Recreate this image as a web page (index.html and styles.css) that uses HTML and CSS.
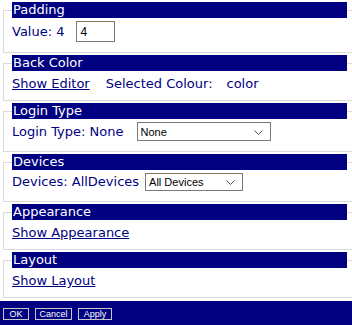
FILE: index.html
```html
<!DOCTYPE html>
<html lang="en">
<head>
  <meta charset="UTF-8">
  <meta name="viewport" content="width=device-width, initial-scale=1.0">
  <title>Module Settings</title>
  <link rel="stylesheet" href="styles.css">
</head>
<body>
  <div class="settings">
    <fieldset class="group">
      <legend>Padding</legend>
      <div class="row">
        <label for="padding" class="label">Value: 4</label>
        <input type="text" id="padding" class="value-input" value="4">
      </div>
    </fieldset>

    <fieldset class="group group-text">
      <legend>Back Color</legend>
      <div class="row">
        <a href="#" class="link">Show Editor</a>
        <span class="label selected">Selected Colour:</span>
        <span class="label colour-name">color</span>
      </div>
    </fieldset>

    <fieldset class="group">
      <legend>Login Type</legend>
      <div class="row">
        <label for="loginType" class="label">Login Type: None</label>
        <span class="select-wrap login-select">
          <select id="loginType" class="dropdown">
            <option>None</option>
            <option>Required</option>
          </select>
          <svg class="chevron" width="9" height="5" viewBox="0 0 9 5"><path d="M0.5 0.5 L4.5 4.5 L8.5 0.5" fill="none" stroke="#555" stroke-width="1"/></svg>
        </span>
      </div>
    </fieldset>

    <fieldset class="group">
      <legend>Devices</legend>
      <div class="row">
        <label for="devices" class="label">Devices: AllDevices</label>
        <span class="select-wrap devices-select">
          <select id="devices" class="dropdown">
            <option>All Devices</option>
            <option>Desktop</option>
            <option>Mobile</option>
          </select>
          <svg class="chevron" width="9" height="5" viewBox="0 0 9 5"><path d="M0.5 0.5 L4.5 4.5 L8.5 0.5" fill="none" stroke="#555" stroke-width="1"/></svg>
        </span>
      </div>
    </fieldset>

    <fieldset class="group group-text">
      <legend>Appearance</legend>
      <div class="row">
        <a href="#" class="link">Show Appearance</a>
      </div>
    </fieldset>

    <fieldset class="group group-text">
      <legend>Layout</legend>
      <div class="row">
        <a href="#" class="link">Show Layout</a>
      </div>
    </fieldset>
  </div>

  <div class="button-bar">
    <button type="button" class="bar-btn btn-ok">OK</button>
    <button type="button" class="bar-btn btn-cancel">Cancel</button>
    <button type="button" class="bar-btn btn-apply">Apply</button>
  </div>
</body>
</html>
```

FILE: styles.css
```css
body {
  margin: 0;
  padding: 0;
  font-family: "DejaVu Sans", Verdana, sans-serif;
  font-size: 13px;
  color: #000080;
  background-color: #fff;
  overflow: hidden;
}

.settings {
  padding-top: 2px;
}

.group {
  margin: 0 0 2px 3px;
  padding: 3px 8px 10px 8px;
  border: 1px solid #dadada;
  border-right: none;
  min-width: 0;
}

.group-text {
  padding-top: 5px;
  padding-bottom: 8px;
}

.group legend {
  box-sizing: border-box;
  width: 335px;
  height: 16px;
  line-height: 16px;
  padding: 0 1px;
  background-color: #000080;
  color: #fff;
}

.row {
  display: flex;
  align-items: center;
  min-height: 16px;
  line-height: 16px;
}

.label {
  white-space: nowrap;
}

.value-input {
  box-sizing: border-box;
  width: 39px;
  height: 21px;
  margin: 0 0 0 12px;
  padding: 0 3px;
  border: 1px solid #7a7a7a;
  font-family: "Liberation Sans", Arial, sans-serif;
  font-size: 12px;
  color: #000;
}

.link {
  color: #000080;
  text-decoration: underline;
}

.selected {
  margin-left: 16px;
}

.colour-name {
  margin-left: 14px;
}

.select-wrap {
  position: relative;
  display: inline-block;
}

.login-select {
  margin-left: 13px;
}

.devices-select {
  margin-left: 6px;
}

.dropdown {
  -webkit-appearance: none;
  appearance: none;
  box-sizing: border-box;
  display: block;
  margin: 0;
  padding: 0 0 0 3px;
  border: 1px solid #7a7a7a;
  border-radius: 0;
  background-color: #fff;
  font-family: "Liberation Sans", Arial, sans-serif;
  font-size: 11px;
  color: #000;
}

.login-select .dropdown {
  width: 134px;
  height: 19px;
}

.devices-select .dropdown {
  width: 98px;
  height: 18px;
}

.chevron {
  position: absolute;
  right: 8px;
  top: 50%;
  margin-top: -2px;
  pointer-events: none;
}

.button-bar {
  display: flex;
  gap: 6px;
  height: 24px;
  margin-top: 3px;
  padding: 7px 3px 0;
  box-sizing: border-box;
  background-color: #000080;
}

.bar-btn {
  box-sizing: border-box;
  height: 12px;
  padding: 0;
  border: 1px solid #c8c8c8;
  background-color: #000080;
  color: #fff;
  font-family: "Liberation Sans", Arial, sans-serif;
  font-size: 9px;
  line-height: 10px;
  cursor: pointer;
}

.btn-ok {
  width: 26px;
}

.btn-cancel {
  width: 37px;
}

.btn-apply {
  width: 34px;
}
```
